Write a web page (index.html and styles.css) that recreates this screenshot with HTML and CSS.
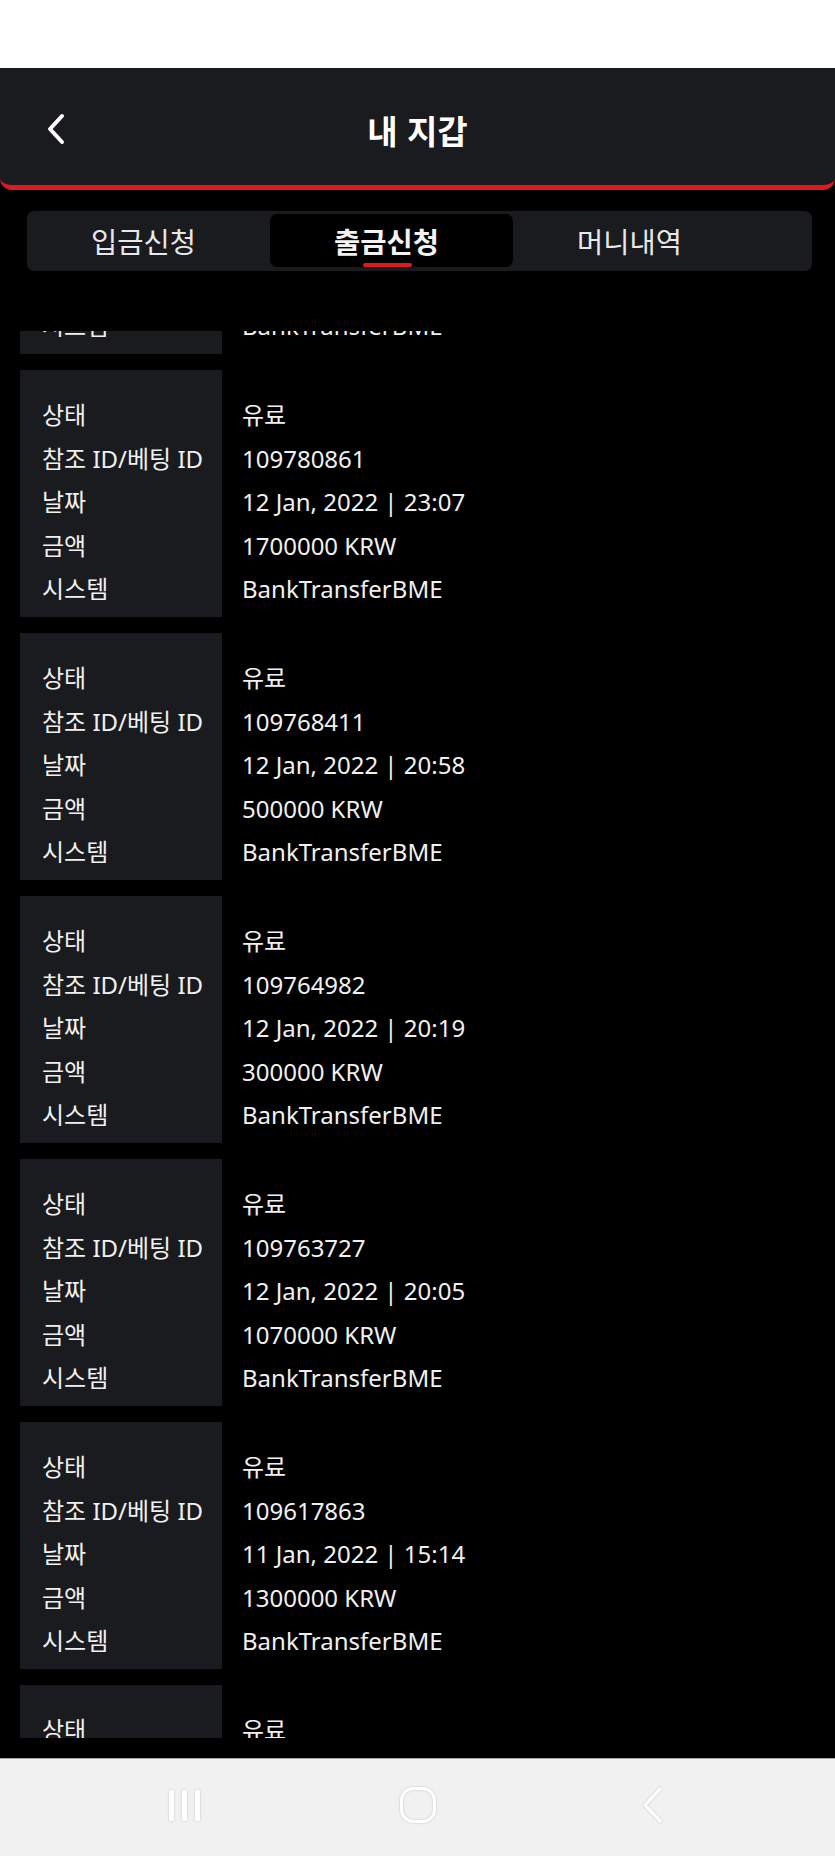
FILE: index.html
```html
<!DOCTYPE html>
<html lang="ko">
  <head>
    <meta charset="utf-8">
    <title>내 지갑</title>
    <link rel="stylesheet" href="styles.css">
  </head>
  <body>
    <div class="statusbar"></div>
    <div class="header">
      <div class="back">
        <svg width="20" height="32" viewBox="0 0 20 32"><path d="M16 3 L4 16 L16 29" fill="none" stroke="#fff" stroke-width="4" stroke-linecap="round" stroke-linejoin="round"/></svg>
      </div>
      <h1>내 지갑</h1>
      <div></div>
    </div>

    <div class="tabs">
      <div class="tab">입금신청</div>
      <div class="tab active">출금신청</div>
      <div class="tab">머니내역</div>
    </div>

    <div class="list">
      <div class="inner">
        <div class="card">
          <div class="labels">
            <div>상태</div><div>참조 ID/베팅 ID</div><div>날짜</div><div>금액</div><div>시스템</div>
          </div>
          <div class="values">
            <div>유료</div><div>109781502</div><div>13 Jan, 2022 | 00:12</div><div>600000 KRW</div><div>BankTransferBME</div>
          </div>
        </div>
        <div class="card">
          <div class="labels">
            <div>상태</div><div>참조 ID/베팅 ID</div><div>날짜</div><div>금액</div><div>시스템</div>
          </div>
          <div class="values">
            <div>유료</div><div>109780861</div><div>12 Jan, 2022 | 23:07</div><div>1700000 KRW</div><div>BankTransferBME</div>
          </div>
        </div>
        <div class="card">
          <div class="labels">
            <div>상태</div><div>참조 ID/베팅 ID</div><div>날짜</div><div>금액</div><div>시스템</div>
          </div>
          <div class="values">
            <div>유료</div><div>109768411</div><div>12 Jan, 2022 | 20:58</div><div>500000 KRW</div><div>BankTransferBME</div>
          </div>
        </div>
        <div class="card">
          <div class="labels">
            <div>상태</div><div>참조 ID/베팅 ID</div><div>날짜</div><div>금액</div><div>시스템</div>
          </div>
          <div class="values">
            <div>유료</div><div>109764982</div><div>12 Jan, 2022 | 20:19</div><div>300000 KRW</div><div>BankTransferBME</div>
          </div>
        </div>
        <div class="card">
          <div class="labels">
            <div>상태</div><div>참조 ID/베팅 ID</div><div>날짜</div><div>금액</div><div>시스템</div>
          </div>
          <div class="values">
            <div>유료</div><div>109763727</div><div>12 Jan, 2022 | 20:05</div><div>1070000 KRW</div><div>BankTransferBME</div>
          </div>
        </div>
        <div class="card">
          <div class="labels">
            <div>상태</div><div>참조 ID/베팅 ID</div><div>날짜</div><div>금액</div><div>시스템</div>
          </div>
          <div class="values">
            <div>유료</div><div>109617863</div><div>11 Jan, 2022 | 15:14</div><div>1300000 KRW</div><div>BankTransferBME</div>
          </div>
        </div>
        <div class="card">
          <div class="labels">
            <div>상태</div><div>참조 ID/베팅 ID</div><div>날짜</div><div>금액</div><div>시스템</div>
          </div>
          <div class="values">
            <div>유료</div><div>109612245</div><div>11 Jan, 2022 | 14:40</div><div>800000 KRW</div><div>BankTransferBME</div>
          </div>
        </div>
      </div>
    </div>

    <div class="navbar">
      <div class="navbtn">
        <svg width="36" height="36" viewBox="0 0 36 36"><rect x="3" y="3" width="5" height="31" rx="1" fill="#fff"/><rect x="16" y="3" width="5" height="31" rx="1" fill="#fff"/><rect x="29" y="3" width="5" height="31" rx="1" fill="#fff"/></svg>
      </div>
      <div class="navbtn">
        <svg width="40" height="40" viewBox="0 0 40 40"><rect x="3.5" y="3.5" width="33" height="33" rx="12" fill="none" stroke="#fff" stroke-width="3"/></svg>
      </div>
      <div class="navbtn">
        <svg width="26" height="38" viewBox="0 0 26 38"><path d="M21 3 L6 19 L21 35" fill="none" stroke="#fff" stroke-width="3" stroke-linecap="round" stroke-linejoin="round"/></svg>
      </div>
    </div>
  </body>
</html>
```

FILE: styles.css
```css
body{
  margin: 0;
  background-color: #000;
  color: #f0f0f0;
  font-family: "Noto Sans", "Noto Sans CJK KR", sans-serif;
}
.statusbar{
  height: 68px;
  background-color: #fff;
}
.header{
  height: 117px;
  background-color: #1a1b1f;
  border-bottom: 5px solid #dc1a22;
  border-radius: 0 0 12px 12px;
  display: grid;
  grid-template-columns: 1fr auto 1fr;
  align-items: center;
}
.back{
  padding-left: 46px;
  padding-top: 4px;
  display: flex;
}
.header h1{
  margin: 0;
  padding-top: 6px;
  font-family: "Noto Sans CJK KR", sans-serif;
  font-size: 33px;
  font-weight: bold;
  color: #fff;
}
.tabs{
  margin: 21px 23px 0 27px;
  height: 53px;
  padding: 3px 0 4px 0;
  background-color: #1a1b1f;
  border-radius: 7px;
  display: grid;
  grid-template-columns: 243px 243px 243px;
}
.tab{
  position: relative;
  display: flex;
  align-items: center;
  justify-content: center;
  padding-right: 10px;
  font-family: "Noto Sans CJK KR", sans-serif;
  font-size: 28.5px;
  color: #e8e8e8;
  border-radius: 7px;
}
.tab.active{
  background-color: #000;
  font-weight: bold;
  color: #f2f2f2;
}
.tab.active::after{
  content: "";
  position: absolute;
  left: 93px;
  bottom: 0;
  width: 49px;
  height: 4px;
  border-radius: 2px;
  background-color: #dc1a22;
}
.list{
  margin-top: 60px;
  height: 1407px;
  overflow: hidden;
}
.inner{
  margin-top: -224px;
}
.card{
  display: flex;
  height: 247px;
  margin-bottom: 16px;
  font-size: 24px;
}
.card .labels{
  width: 180px;
  margin-left: 20px;
  padding: 23px 0 6px 22px;
  background-color: #1a1b1f;
}
.card .values{
  padding: 23px 0 6px 20px;
}
.card .labels div,
.card .values div{
  height: 43.6px;
  line-height: 43.6px;
  white-space: nowrap;
}
.navbar{
  margin-top: 20px;
  height: 97px;
  border-top: 1px solid #a8a8a8;
  background-color: #f1f1f1;
  display: grid;
  grid-template-columns: repeat(3, 234px);
  justify-content: center;
  align-items: center;
}
.navbtn{
  display: flex;
  justify-content: center;
  padding-bottom: 6px;
}
.navbtn svg{
  filter: drop-shadow(0 0 1px rgba(0,0,0,0.18));
}
```
